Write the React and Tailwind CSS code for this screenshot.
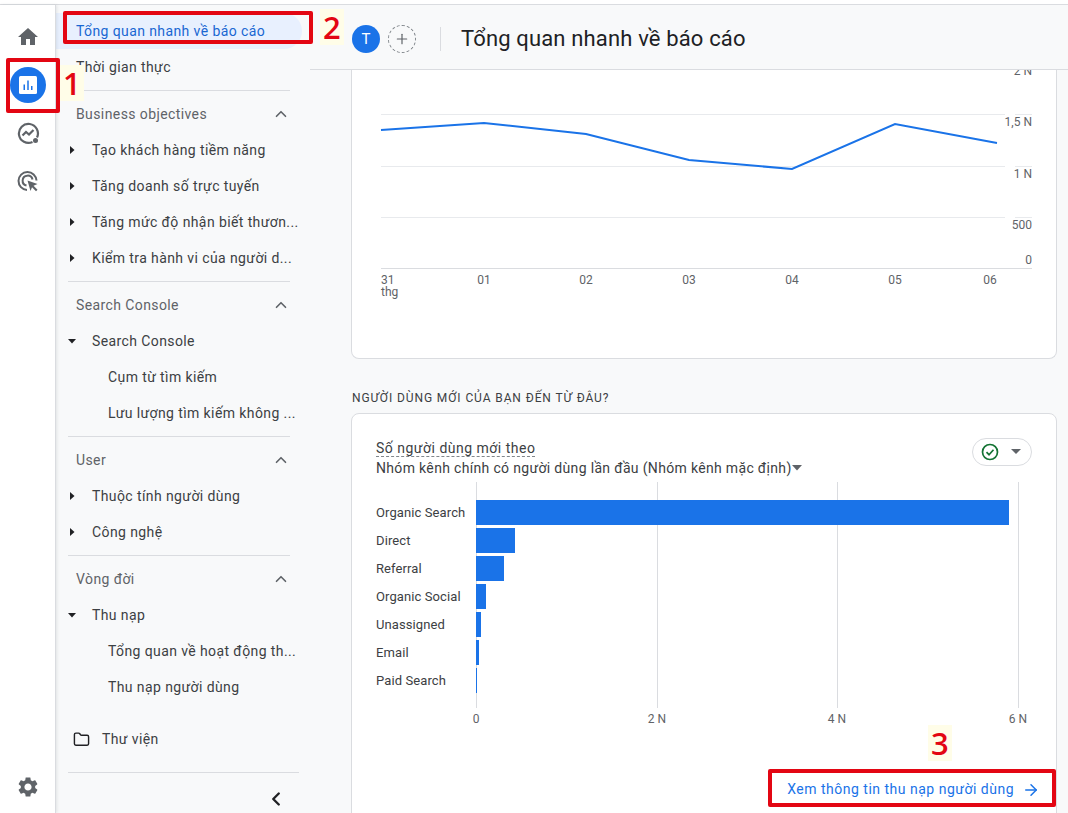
import React from 'react';
import { ChevronUp, ChevronLeft, Plus, ArrowRight, Folder } from 'lucide-react';

const Caret = ({ down }) => (
  <svg width="10" height="10" viewBox="0 0 10 10" className="shrink-0 text-[#202124]" fill="currentColor">
    {down ? <path d="M1 3h8L5 7.5z" /> : <path d="M3 1v8l4.5-4z" />}
  </svg>
);

const Divider = ({ w = 'w-[222px]' }) => <div className={`h-px ${w} ml-3 bg-[#dadce0]`} />;

const Section = ({ title, children, last }) => (
  <div>
    <div className="h-[46px] flex items-center justify-between pl-5 pr-5 text-[14px] tracking-[0.4px] text-[#5f6368]">
      <span>{title}</span>
      <ChevronUp size={18} strokeWidth={2.2} />
    </div>
    <div className="-mt-[5px]">{children}</div>
    {!last && <div className="mt-[5px]"><Divider /></div>}
  </div>
);

const Item = ({ children, caret, down }) => (
  <div className="h-9 flex items-center pl-[11px] text-[14px] tracking-[0.4px] text-[#3c4043]">
    {caret ? <Caret down={down} /> : <span className="w-[10px]" />}
    <span className="ml-[15px] whitespace-nowrap">{children}</span>
  </div>
);

const SubItem = ({ children }) => (
  <div className="h-9 flex items-center pl-[52px] text-[14px] tracking-[0.4px] text-[#3c4043] whitespace-nowrap">{children}</div>
);

const Rail = () => (
  <div className="w-[56px] shrink-0 flex flex-col items-center bg-white border-r border-[#dadce0] shadow-[1px_0_3px_rgba(60,64,67,0.12)] z-10 pt-[20px] pb-[14px]">
    <svg width="24" height="24" viewBox="0 0 24 24" fill="#5f6368"><path d="M10 20v-6h4v6h5v-8h3L12 3 2 12h3v8z" /></svg>
    <div className="mt-[18px] w-9 h-9 rounded-full bg-[#1a73e8] flex items-center justify-center">
      <svg width="20" height="20" viewBox="0 0 20 20">
        <rect x="1" y="1" width="18" height="18" rx="1.5" fill="#fff" />
        <path d="M5.500 9.500h1.500V15H5.500zM9.250 5.500h1.500V15h-1.500zM13 11h1.500v4H13z" fill="#1a73e8" />
      </svg>
    </div>
    <svg className="mt-[18px]" width="24" height="24" viewBox="0 0 24 24" fill="none" stroke="#5f6368" strokeWidth="2.200">
      <path d="M21 16.500A9.500 9.500 0 1 0 16.500 21" />
      <path d="M6.500 14.500l3.500-3.500 3 2.500 4.500-4.500" />
      <circle cx="19.500" cy="19.500" r="2.500" fill="#5f6368" strokeWidth="0" />
    </svg>
    <svg className="mt-[24px]" width="24" height="24" viewBox="0 0 24 24" fill="none" stroke="#5f6368" strokeWidth="2">
      <path d="M11 21a9 9 0 1 1 9.500-9.500" />
      <path d="M10.500 16.500a5 5 0 1 1 6-6" />
      <path d="M11.500 11.500l10 3.500-4 1.800 4 4-1.500 1.500-4-4-1.500 3.800z" fill="#5f6368" stroke="none" />
    </svg>
    <svg className="mt-auto" width="24" height="24" viewBox="0 0 24 24" fill="#5f6368">
      <path d="M19.140 12.940c.04-.3.06-.61.06-.94 0-.32-.02-.64-.07-.94l2.030-1.580c.18-.14.23-.41.12-.61l-1.920-3.320c-.12-.22-.37-.29-.59-.22l-2.390.96c-.5-.38-1.030-.7-1.620-.94l-.36-2.540c-.04-.24-.24-.41-.48-.41h-3.840c-.24 0-.43.17-.47.41l-.36 2.540c-.59.24-1.130.57-1.620.94l-2.390-.96c-.22-.08-.47 0-.59.22L2.740 8.870c-.12.21-.08.47.12.61l2.030 1.580c-.05.3-.09.63-.09.94s.02.64.07.94l-2.030 1.580c-.18.14-.23.41-.12.61l1.920 3.320c.12.22.37.29.59.22l2.390-.96c.5.38 1.030.7 1.620.94l.36 2.540c.05.24.24.41.48.41h3.840c.24 0 .44-.17.47-.41l.36-2.540c.59-.24 1.130-.56 1.620-.94l2.390.96c.22.08.47 0 .59-.22l1.920-3.320c.12-.22.07-.47-.12-.61l-2.010-1.580zM12 15.600c-1.980 0-3.600-1.620-3.600-3.600s1.620-3.600 3.600-3.600 3.600 1.620 3.600 3.600-1.620 3.600-3.600 3.600z" />
    </svg>
  </div>
);

const Sidebar = () => (
  <div className="w-[254px] shrink-0 pt-[8px] flex flex-col">
    <div className="h-9 w-[246px] rounded-r-full bg-[#e8f0fe] flex items-center pl-5 text-[14px] tracking-[0.4px] text-[#1967d2]">Tổng quan nhanh về báo cáo</div>
    <div className="h-9 flex items-center pl-5 text-[14px] tracking-[0.4px] text-[#3c4043]">Thời gian thực</div>
    <div className="mt-[5px]"><Divider /></div>
    <Section title="Business objectives">
      <Item caret>Tạo khách hàng tiềm năng</Item>
      <Item caret>Tăng doanh số trực tuyến</Item>
      <Item caret>Tăng mức độ nhận biết thươn...</Item>
      <Item caret>Kiểm tra hành vi của người d...</Item>
    </Section>
    <Section title="Search Console">
      <Item caret down>Search Console</Item>
      <SubItem>Cụm từ tìm kiếm</SubItem>
      <SubItem>Lưu lượng tìm kiếm không ...</SubItem>
    </Section>
    <Section title="User">
      <Item caret>Thuộc tính người dùng</Item>
      <Item caret>Công nghệ</Item>
    </Section>
    <Section title="Vòng đời" last>
      <Item caret down>Thu nạp</Item>
      <SubItem>Tổng quan về hoạt động th...</SubItem>
      <SubItem>Thu nạp người dùng</SubItem>
    </Section>
    <div className="mt-[16px] h-9 flex items-center pl-[17px] text-[14px] tracking-[0.4px] text-[#3c4043]">
      <Folder size={17} strokeWidth={2} className="text-[#202124]" />
      <span className="ml-[12px]">Thư viện</span>
    </div>
    <div className="mt-[15px]"><Divider w="w-[231px]" /></div>
    <div className="flex justify-end pr-[23px] mt-[15px]">
      <ChevronLeft size={22} strokeWidth={2.6} className="text-[#202124]" />
    </div>
  </div>
);

const linePoints = '381,130 484,123 586,134 689,160 792,169 895,124 997,143';

const LineChart = () => (
  <svg width="706" height="288" viewBox="351 70 706 288" className="block">
    <g stroke="#e8eaed" strokeWidth="1">
      <path d="M381 114.500H1005M1015 114.500h17" />
      <path d="M381 166.500H1005M1015 166.500h17" />
      <path d="M381 217.500H1005M1015 217.500h17" />
      <path d="M381 268.500H1032" stroke="#dadce0" />
    </g>
    <polyline points={linePoints} fill="none" stroke="#1a73e8" strokeWidth="2" />
    <g fontSize="12" fill="#5f6368" textAnchor="end">
      <text x="1032" y="75">2 N</text>
      <text x="1032" y="126">1,5 N</text>
      <text x="1032" y="178">1 N</text>
      <text x="1032" y="229">500</text>
      <text x="1032" y="264">0</text>
    </g>
    <g fontSize="12" fill="#5f6368" textAnchor="middle">
      <text x="484" y="284">01</text>
      <text x="586" y="284">02</text>
      <text x="689" y="284">03</text>
      <text x="792" y="284">04</text>
      <text x="895" y="284">05</text>
      <text x="990" y="284">06</text>
    </g>
    <g fontSize="12" fill="#5f6368">
      <text x="381" y="284">31</text>
      <text x="381" y="296">thg</text>
    </g>
  </svg>
);

const bars = [
  { name: 'Organic Search', w: 533 },
  { name: 'Direct', w: 39 },
  { name: 'Referral', w: 28 },
  { name: 'Organic Social', w: 10 },
  { name: 'Unassigned', w: 5 },
  { name: 'Email', w: 3 },
  { name: 'Paid Search', w: 1 },
];

const BarChart = () => (
  <svg width="680" height="250" viewBox="352 482 680 250" className="block">
    <g stroke="#dadce0">
      <path d="M476.500 482V708M657.500 482V708M837.500 482V708M1018.500 482V708" />
    </g>
    {bars.map((b, i) => (
      <g key={b.name}>
        <rect x="476" y={500 + i * 28} width={b.w} height="25" fill="#1a73e8" />
        <text x="376" y={517 + i * 28} fontSize="13" letterSpacing="0.1" fill="#3c4043">{b.name}</text>
      </g>
    ))}
    <g fontSize="12" fill="#5f6368" textAnchor="middle">
      <text x="476" y="723">0</text>
      <text x="657" y="723">2 N</text>
      <text x="837" y="723">4 N</text>
      <text x="1018" y="723">6 N</text>
    </g>
  </svg>
);

const Main = () => (
  <div className="flex-1 min-w-0 flex flex-col">
    <div className="h-[65px] shrink-0 border-b border-[#dadce0] flex items-center pl-[42px] pt-[4px]">
      <div className="w-7 h-7 rounded-full bg-[#1a73e8] text-white text-[15px] flex items-center justify-center">T</div>
      <div className="ml-[8px] w-7 h-7 rounded-full border border-dashed border-[#80868b] flex items-center justify-center">
        <Plus size={16} strokeWidth={1.8} className="text-[#5f6368]" />
      </div>
      <div className="ml-[24px] w-px h-6 bg-[#dadce0]" />
      <div className="ml-5 text-[22px] leading-7 tracking-[0.15px] text-[#202124]">Tổng quan nhanh về báo cáo</div>
    </div>
    <div className="flex-1 min-h-0 overflow-hidden pl-[41px] pr-[11px]">
      <div className="bg-white border-x border-b border-[#dadce0] rounded-b-lg h-[289px] overflow-hidden">
        <div className="-ml-px"><LineChart /></div>
      </div>
      <div className="mt-[32px] h-[14px] pl-px flex items-center text-[12px] tracking-[0.9px] text-[#3c4043]">NGƯỜI DÙNG MỚI CỦA BẠN ĐẾN TỪ ĐÂU?</div>
      <div className="mt-[8px] bg-white border border-[#dadce0] rounded-lg h-[420px] pt-[24px] pl-6 pr-6">
        <div className="flex justify-between">
          <div className="text-[14px] leading-5 text-[#3c4043]">
            <div className="tracking-[0.5px]"><span className="border-b border-dashed border-[#80868b]">Số người dùng mới theo</span></div>
            <div className="flex items-center whitespace-nowrap tracking-[0.33px]">
              Nhóm kênh chính có người dùng lần đầu (Nhóm kênh mặc định)
              <svg width="10" height="6" viewBox="0 0 10 6" fill="#5f6368"><path d="M0 0h10L5 5.500z" /></svg>
            </div>
          </div>
          <div className="w-[60px] h-[28px] rounded-full border border-[#dadce0] flex items-center pl-2 gap-[12px]">
            <svg width="18" height="18" viewBox="0 0 18 18" fill="none" stroke="#137333" strokeWidth="1.700">
              <circle cx="9" cy="9" r="7.500" />
              <path d="M5.500 9.200l2.500 2.500 4.500-5" />
            </svg>
            <svg width="10" height="6" viewBox="0 0 10 6" fill="#5f6368"><path d="M0 0h10L5 5z" /></svg>
          </div>
        </div>
        <div className="mt-[4px] -ml-6"><BarChart /></div>
        <div className="mt-[47px] flex justify-end items-center text-[14px] tracking-[0.5px] text-[#1a73e8]">
          <span>Xem thông tin thu nạp người dùng</span>
          <ArrowRight size={18} strokeWidth={2} className="ml-[8px] mr-[-8px]" />
        </div>
      </div>
    </div>
  </div>
);

const Mark = ({ className }) => (
  <div className={`absolute z-20 border-4 border-[#e30613] rounded-[2px] ${className}`} />
);

const Num = ({ className, children }) => (
  <div className={`absolute z-20 bg-[#fffde8] text-[#e30613] text-[31px] leading-9 font-semibold font-['Open_Sans',sans-serif] px-[3px] ${className}`}>{children}</div>
);

export default function App() {
  return (
    <div className="relative w-[1068px] h-[813px] overflow-hidden flex flex-col bg-[#f8f9fa] font-['Roboto','Noto_Sans',sans-serif]">
      <div className="h-[5px] shrink-0 bg-white border-b border-[#dadce0]" />
      <div className="flex-1 min-h-0 flex">
        <Rail />
        <Sidebar />
        <Main />
      </div>
      <Mark className="left-[6px] top-[58px] w-[54px] h-[55px]" />
      <Mark className="left-[63px] top-[11px] w-[250px] h-[33px]" />
      <Mark className="left-[768px] top-[769px] w-[288px] h-[38px]" />
      <Num className="left-[60px] top-[65px]">1</Num>
      <Num className="left-[320px] top-[9px]">2</Num>
      <Num className="left-[928px] top-[725px]">3</Num>
    </div>
  );
}
